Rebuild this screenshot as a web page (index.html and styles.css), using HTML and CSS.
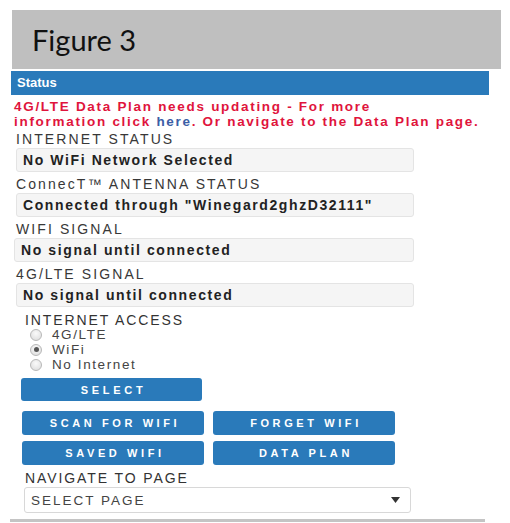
FILE: index.html
```html
<!DOCTYPE html>
<html lang="en">
<head>
  <meta charset="UTF-8" />
  <meta name="viewport" content="width=device-width, initial-scale=1.0" />
  <title>Status</title>
  <link rel="stylesheet" href="styles.css">
</head>
<body>
  <div class="figure">Figure 3</div>
  <div class="panel">
    <div class="panel-head">Status</div>
    <div class="alert">
      4G/LTE Data Plan needs updating - For more<br>
      information click <a href="#">here</a>. Or navigate to the Data Plan page.
    </div>

    <div class="field">
      <div class="field-label">INTERNET STATUS</div>
      <div class="field-box">No WiFi Network Selected</div>
    </div>
    <div class="field">
      <div class="field-label">ConnecT™ ANTENNA STATUS</div>
      <div class="field-box">Connected through "Winegard2ghzD32111"</div>
    </div>
    <div class="field">
      <div class="field-label">WIFI SIGNAL</div>
      <div class="field-box shift">No signal until connected</div>
    </div>
    <div class="field">
      <div class="field-label">4G/LTE SIGNAL</div>
      <div class="field-box">No signal until connected</div>
    </div>

    <div class="access">
      <div class="section-label">INTERNET ACCESS</div>
      <label class="radio"><input type="radio" name="access"> 4G/LTE</label>
      <label class="radio"><input type="radio" name="access" checked> WiFi</label>
      <label class="radio"><input type="radio" name="access"> No Internet</label>
      <button class="btn btn-select">SELECT</button>
    </div>

    <div class="btn-grid">
      <button class="btn">SCAN FOR WIFI</button>
      <button class="btn">FORGET WIFI</button>
      <button class="btn">SAVED WIFI</button>
      <button class="btn">DATA PLAN</button>
    </div>

    <div class="nav">
      <div class="section-label">NAVIGATE TO PAGE</div>
      <div class="select">
        <span>SELECT PAGE</span>
        <svg width="9" height="6" viewBox="0 0 9 6"><path d="M0 0h9L4.5 6z" fill="#333"/></svg>
      </div>
    </div>
  </div>
  <div class="bottom-line"></div>
</body>
</html>
```
FILE: styles.css
```css
body {
  margin: 0;
  font-family: "Liberation Sans", Arial, sans-serif;
  background: #fff;
  overflow: hidden;
}
.figure {
  margin: 10px 9px 0 12px;
  height: 59px;
  padding-left: 20px;
  background: #bfbfbf;
  font-family: Lato, "Open Sans", sans-serif;
  font-size: 29px;
  color: #111;
  display: flex;
  align-items: center;
}
.panel {
  margin: 2px 0 0 11px;
  width: 478px;
}
.panel-head {
  height: 24px;
  line-height: 23px;
  background: #2a7aba;
  color: #fff;
  font-size: 13px;
  font-weight: bold;
  padding-left: 6px;
}
.alert {
  padding: 4px 0 0 3px;
  color: #e0143c;
  font-size: 13.5px;
  font-weight: bold;
  line-height: 15px;
  letter-spacing: 1.7px;
}
.alert a {
  color: #3b5ea6;
  text-decoration: none;
}
.field {
  margin: 2px 0 0 5px;
  width: 398px;
}
.field + .field {
  margin-top: 4px;
}
.field-label {
  font-size: 14px;
  line-height: 16px;
  color: #383838;
  letter-spacing: 2.1px;
}
.field-box {
  margin-top: 1px;
  height: 24px;
  box-sizing: border-box;
  background: #f5f5f5;
  border: 1px solid #e4e4e4;
  border-radius: 3px;
  padding-left: 6px;
  font-size: 14px;
  line-height: 22px;
  font-weight: bold;
  color: #222;
  letter-spacing: 1.6px;
}
.field-box.shift {
  margin-left: -2px;
  width: 400px;
}
.access {
  margin: 6px 0 0 10px;
}
.section-label {
  padding-left: 4px;
  font-size: 14px;
  line-height: 14px;
  color: #333;
  letter-spacing: 1.9px;
}
.radio {
  display: flex;
  align-items: center;
  height: 15px;
  padding-left: 9px;
  font-size: 13.5px;
  color: #444;
  letter-spacing: 1.6px;
}
.radio input {
  appearance: none;
  margin: 0 10px 0 0;
  width: 12px;
  height: 12px;
  border-radius: 50%;
  border: 1px solid #b8b8b8;
  background: radial-gradient(circle at 50% 35%, #fafafa, #dadada);
  display: grid;
  place-items: center;
}
.radio input:checked::after {
  content: "";
  width: 5px;
  height: 5px;
  border-radius: 50%;
  background: #555;
}
.btn {
  display: block;
  height: 24px;
  border: 0;
  border-radius: 3px;
  background: #2a7aba;
  color: #fff;
  font-family: "Liberation Sans", Arial, sans-serif;
  font-size: 11px;
  font-weight: bold;
  letter-spacing: 3.6px;
  padding: 0 0 0 4px;
  cursor: pointer;
}
.btn-select {
  margin-top: 6px;
  width: 181px;
  height: 23px;
  letter-spacing: 3.7px;
}
.btn-grid {
  margin: 10px 0 0 11px;
  display: grid;
  grid-template-columns: 182px 182px;
  column-gap: 9px;
  row-gap: 6px;
}
.nav {
  margin: 6px 0 0 10px;
}
.select {
  margin: 2px 0 0 3px;
  width: 387px;
  height: 26px;
  box-sizing: border-box;
  border: 1px solid #d8d8d8;
  border-radius: 3px;
  display: flex;
  align-items: center;
  justify-content: space-between;
  padding: 0 10px 0 6px;
  font-size: 13.5px;
  color: #444;
  letter-spacing: 2px;
}
.bottom-line {
  margin: 6px 0 0 10px;
  width: 475px;
  height: 3px;
  background: #c4c4c4;
}
```
